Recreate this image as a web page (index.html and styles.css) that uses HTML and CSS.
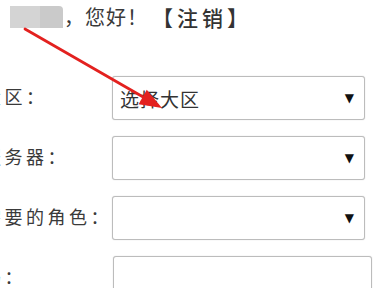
FILE: index.html
```html
<!DOCTYPE html>
<html lang="zh-CN">
<head>
<meta charset="utf-8">
<title>选择角色</title>
<link rel="stylesheet" href="styles.css">
</head>
<body>
<div class="page">
  <div class="header">
    <span class="user-blur"></span>
    <span class="greet">，您好！</span>
    <a class="logout">【注销】</a>
  </div>
  <div class="form">
    <label class="label">大区：</label>
    <div class="field select"><span class="value">选择大区</span><span class="caret">▼</span></div>
    <label class="label">服务器：</label>
    <div class="field select"><span class="value"></span><span class="caret">▼</span></div>
    <label class="label">需要的角色：</label>
    <div class="field select"><span class="value"></span><span class="caret">▼</span></div>
    <label class="label">码：</label>
    <div class="field input"></div>
  </div>
  <svg class="arrow" width="387" height="288" viewBox="0 0 387 288">
    <line x1="25" y1="29" x2="144" y2="97.5" stroke="#e3211f" stroke-width="2.8" stroke-linecap="round"/>
    <polygon points="162,108 138.6,104.2 146.8,89.8" fill="#e3211f"/>
  </svg>
</div>
</body>
</html>
```
FILE: styles.css
```css
html, body {
  margin: 0;
  padding: 0;
  background: #fff;
}
body {
  font-family: "Noto Sans CJK SC", "Noto Sans", sans-serif;
  color: #333;
  overflow: hidden;
}
.page {
  position: relative;
  width: 387px;
  height: 288px;
  overflow: hidden;
}
.header {
  display: flex;
  align-items: center;
  padding: 6px 0 0 10px;
  height: 22px;
}
.user-blur {
  width: 53px;
  height: 22px;
  background: linear-gradient(to right, #d4d4d4 0 56%, #cacaca 56% 100%);
  border-radius: 0 4px 0 0;
}
.greet {
  font-size: 20px;
  line-height: 22px;
  letter-spacing: 1px;
  margin-left: 1px;
  color: #3a3a3a;
}
.logout {
  font-size: 21px;
  line-height: 22px;
  letter-spacing: 4px;
  margin-left: 4px;
  color: #333;
  font-weight: 500;
}
.form {
  display: grid;
  grid-template-columns: 129px 253px;
  row-gap: 16px;
  align-items: center;
  margin-top: 48px;
  margin-left: -17px;
}
.label {
  font-size: 18px;
  letter-spacing: 3.5px;
  line-height: 24px;
  padding-bottom: 4px;
  white-space: nowrap;
  color: #3a3a3a;
}
.field {
  box-sizing: border-box;
  height: 44px;
  border: 1px solid #bcbcbc;
  border-radius: 3px;
  box-shadow: 0 0 1px rgba(0,0,0,0.25);
  background: #fff;
}
.select {
  display: flex;
  align-items: center;
  justify-content: space-between;
  padding: 0 10px 0 7px;
}
.value {
  font-size: 19px;
  letter-spacing: 1px;
  color: #333;
}
.caret {
  font-size: 12px;
  color: #111;
  font-family: "DejaVu Sans", sans-serif;
}
.input {
  width: 259px;
  margin-left: 1px;
}
.arrow {
  position: absolute;
  left: 0;
  top: 0;
  pointer-events: none;
}
```
